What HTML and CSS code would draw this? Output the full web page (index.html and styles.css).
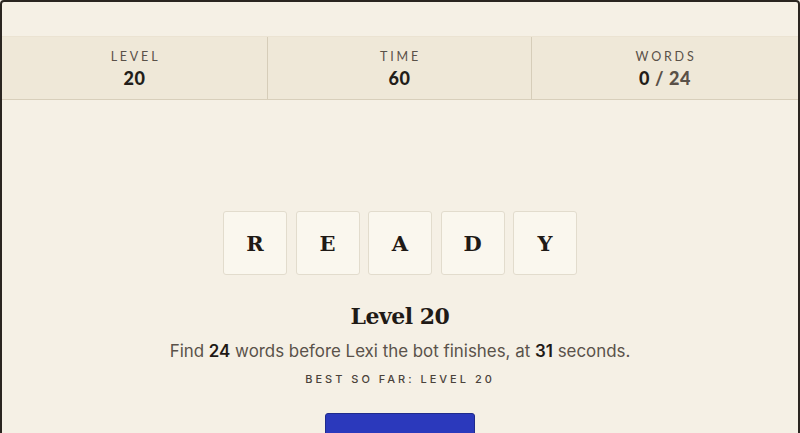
FILE: index.html
```html
<!DOCTYPE html>
<html>
<head>
<meta charset="utf-8">
<link rel="stylesheet" href="styles.css">
</head>
<body>
<div class="frame">
  <div class="top"></div>
  <div class="stats">
    <div class="stat">
      <div class="label">LEVEL</div>
      <div class="value">20</div>
    </div>
    <div class="stat">
      <div class="label">TIME</div>
      <div class="value">60</div>
    </div>
    <div class="stat">
      <div class="label">WORDS</div>
      <div class="value">0<span class="muted"> / 24</span></div>
    </div>
  </div>
  <div class="main">
    <div class="tiles">
      <div class="tile">R</div>
      <div class="tile">E</div>
      <div class="tile">A</div>
      <div class="tile">D</div>
      <div class="tile">Y</div>
    </div>
    <h1 class="heading">Level 20</h1>
    <p class="desc">Find <b>24</b> words before Lexi the bot finishes, at <b>31</b> seconds.</p>
    <div class="best">BEST SO FAR: LEVEL 20</div>
    <button class="start"></button>
  </div>
</div>
</body>
</html>
```

FILE: styles.css
```css
html, body {
  margin: 0;
  padding: 0;
  background: #f5f0e6;
  overflow: hidden;
}
.frame {
  width: 800px;
  height: 520px;
  box-sizing: border-box;
  border: 2px solid #2a2520;
  border-radius: 4px;
  background: #f5f0e5;
  display: flex;
  flex-direction: column;
}
.top {
  height: 34px;
}
.stats {
  display: grid;
  grid-template-columns: 265px 264px 1fr;
  height: 64px;
  background: #efe8d8;
  border-top: 1px solid #ebe3d2;
  border-bottom: 1px solid #d8cfbb;
  box-sizing: border-box;
}
.stat {
  display: flex;
  flex-direction: column;
  align-items: center;
  justify-content: center;
  gap: 3px;
  border-left: 1px solid #d6cdb9;
}
.stat:first-child {
  border-left: none;
}
.label {
  font-family: "Lato", "DejaVu Sans", sans-serif;
  font-size: 12.5px;
  letter-spacing: 2.8px;
  color: #5a5148;
  line-height: 16px;
  padding-left: 2px;
}
.value {
  font-family: "Lato", "DejaVu Sans", sans-serif;
  font-weight: 900;
  font-size: 18px;
  line-height: 20px;
  color: #221d19;
  letter-spacing: 0.6px;
}
.muted {
  color: #5a5148;
}
.main {
  display: flex;
  flex-direction: column;
  align-items: center;
  padding-top: 111px;
}
.tiles {
  display: flex;
  gap: 8.5px;
}
.tile {
  width: 64px;
  height: 64px;
  box-sizing: border-box;
  background: #faf7ee;
  border: 1px solid #e2dccd;
  border-radius: 3px;
  display: flex;
  align-items: center;
  justify-content: center;
  font-family: "DejaVu Serif", serif;
  font-weight: bold;
  font-size: 21px;
  color: #1f1a16;
}
.heading {
  margin: 26px 0 0;
  font-family: "DejaVu Serif", serif;
  font-weight: bold;
  font-size: 22px;
  line-height: 30px;
  color: #1f1a16;
  letter-spacing: -0.5px;
}
.desc {
  margin: 8px 0 0;
  font-family: "Inter", sans-serif;
  font-size: 16.9px;
  line-height: 24px;
  color: #5a524a;
}
.desc b {
  font-weight: 600;
  color: #1f1a16;
}
.best {
  margin-top: 8px;
  font-family: "Inter", sans-serif;
  font-size: 11px;
  font-weight: 500;
  line-height: 16px;
  letter-spacing: 3px;
  color: #4a423a;
}
.start {
  margin-top: 26px;
  width: 150px;
  height: 44px;
  background: #2b39bc;
  border: 1px solid #1f2b8c;
  border-radius: 3px;
}
```
